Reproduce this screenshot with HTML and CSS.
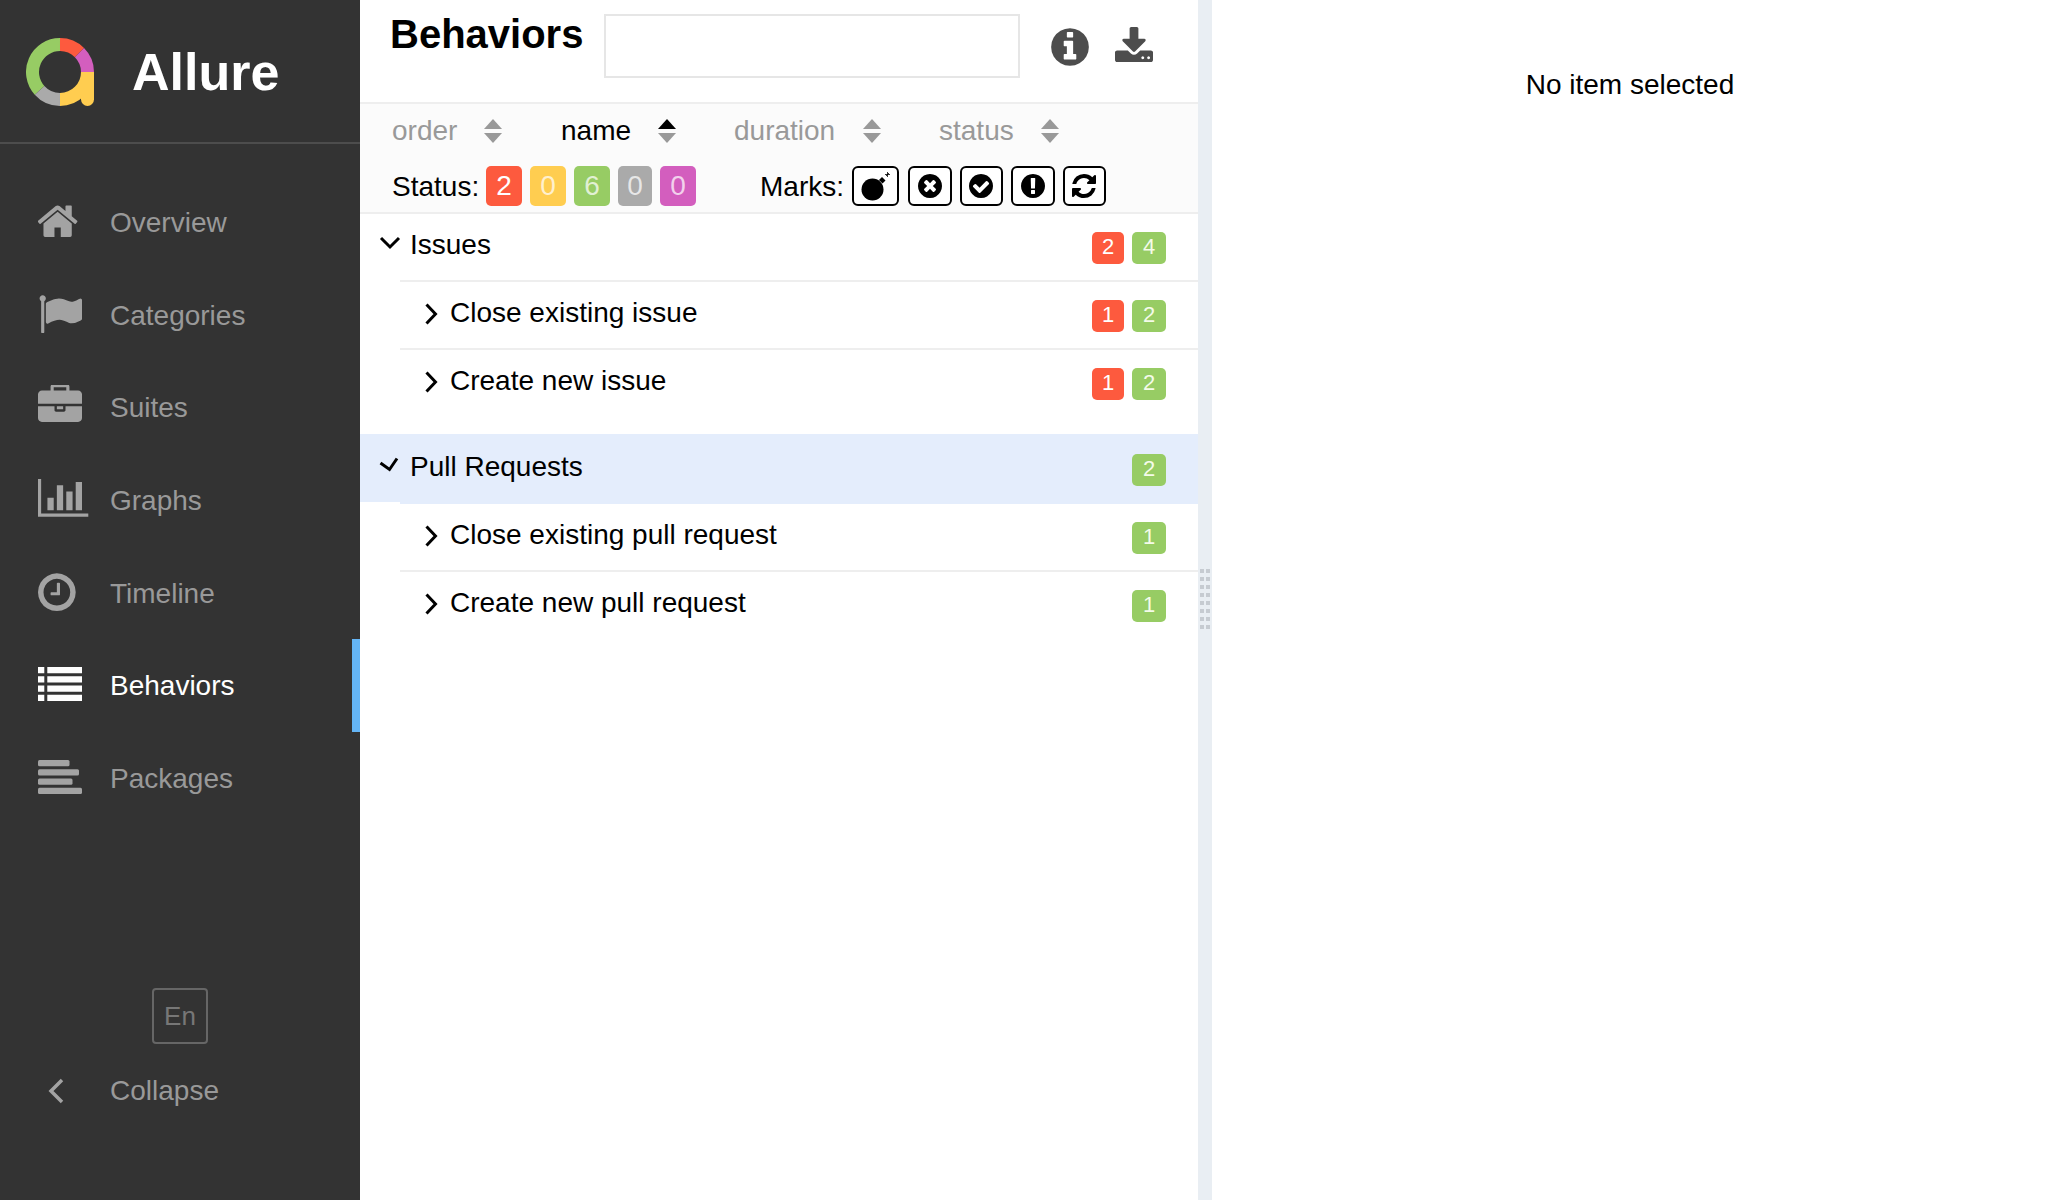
FILE: index.html
```html
<!DOCTYPE html>
<html lang="en">
<head>
<meta charset="utf-8">
<title>Allure</title>
<link rel="stylesheet" href="styles.css">
</head>
<body>
<div class="app">
  <aside class="side">
    <div class="brand">
      <svg class="logo" viewBox="0 0 68 68" fill="none" stroke-width="13">
        <path stroke="#97cc64" d="M13.57 52.4A27.5 27.5 0 0 1 34 6.5"/>
        <path stroke="#fd5a3e" d="M34 6.500A27.500 27.500 0 0 1 53.450 14.550"/>
        <path stroke="#d35ebe" d="M53.450 14.550A27.500 27.500 0 0 1 61.500 34"/>
        <path stroke="#aaaaaa" d="M34 61.500A27.500 27.500 0 0 1 13.570 52.400"/>
        <path stroke="#ffcd50" d="M61.500 34A27.500 27.500 0 0 1 34 61.500"/>
        <path fill="#ffcd50" stroke="none" d="M55 34h13v27.500a6.500 6.500 0 0 1-13 0z"/>
      </svg>
      <span class="brand-name">Allure</span>
    </div>
    <nav class="nav">
      <a class="nav-item"><svg class="nav-ico" viewBox="0 0 1792 1792"><path transform="translate(-97 -32)" d="M1472 992v480q0 26-19 45t-45 19h-384v-384h-256v384h-384q-26 0-45-19t-19-45v-480q0-1 .5-3t.5-3l575-474 575 474q1 2 1 6zm223-69l-62 74q-8 9-21 11h-3q-13 0-21-7l-692-577-692 577q-12 8-24 7-13-2-21-11l-62-74q-8-10-7-23.500t11-21.500l719-599q32-26 76-26t76 26l244 204v-195q0-14 9-23t23-9h192q14 0 23 9t9 23v408l219 182q10 8 11 21.500t-7 23.500z"/></svg><span>Overview</span></a>
      <a class="nav-item"><svg class="nav-ico" viewBox="0 0 1792 1792"><path transform="translate(0 -32)" d="M320 256q0 72-64 110v1266q0 13-9.500 22.500t-22.500 9.500h-64q-13 0-22.500-9.500t-9.500-22.500v-1266q-64-38-64-110 0-53 37.500-90.500t90.500-37.500 90.500 37.500 37.500 90.500zm1472 64v763q0 25-12.500 38.500t-39.500 27.500q-215 116-369 116-61 0-123.500-22t-108.500-48-115.500-48-142.500-22q-192 0-464 146-17 9-33 9-26 0-45-19t-19-45v-742q0-32 31-55 21-14 79-43 236-120 421-120 107 0 200 29t219 88q38 19 88 19 54 0 117.500-21t110-47 88-47 54.500-21q26 0 45 19t19 45z"/></svg><span>Categories</span></a>
      <a class="nav-item"><svg class="nav-ico" viewBox="0 0 1792 1792"><path transform="translate(0 -32)" d="M640 256h512v-128h-512v128zm1152 640v480q0 66-47 113t-113 47h-1472q-66 0-113-47t-47-113v-480h672v160q0 26 19 45t45 19h320q26 0 45-19t19-45v-160h672zm-768 0v128h-256v-128h256zm768-480v384h-1792v-384q0-66 47-113t113-47h352v-160q0-40 28-68t68-28h576q40 0 68 28t28 68v160h352q66 0 113 47t47 113z"/></svg><span>Suites</span></a>
      <a class="nav-item"><svg class="nav-ico" viewBox="0 0 1792 1792" overflow="visible"><path transform="translate(64 -90)" d="M576 896v512h-256v-512h256zm384-512v1024h-256v-1024h256zm1024 1152v128h-2048v-1536h128v1408h1920zm-640-896v768h-256v-768h256zm384-384v1152h-256v-1152h256z"/></svg><span>Graphs</span></a>
      <a class="nav-item"><svg class="nav-ico" viewBox="0 0 1792 1792"><path transform="translate(-128 -32)" d="M1024 544v448q0 14-9 23t-23 9h-320q-14 0-23-9t-9-23v-64q0-14 9-23t23-9h224v-352q0-14 9-23t23-9h64q14 0 23 9t9 23zm416 352q0-148-73-273t-198-198-273-73-273 73-198 198-73 273 73 273 198 198 273 73 273-73 198-198 73-273zm224 0q0 209-103 385.500t-279.500 279.500-385.500 103-385.500-103-279.500-279.500-103-385.500 103-385.500 279.500-279.500 385.500-103 385.500 103 279.500 279.500 103 385.500z"/></svg><span>Timeline</span></a>
      <a class="nav-item nav-active"><svg class="nav-ico" viewBox="0 0 44 44"><path d="M0 4h6.300v6.300H0zM9.300 4H44v6.300H9.300zM0 13.200h6.300v6.300H0zM9.300 13.200H44v6.300H9.300zM0 22.500h6.300v6.300H0zM9.300 22.500H44v6.300H9.300zM0 31.700h6.300V38H0zM9.300 31.700H44V38H9.300z"/></svg><span>Behaviors</span></a>
      <a class="nav-item"><svg class="nav-ico" viewBox="0 0 44 44"><rect x="0" y="4" width="31.500" height="6.300" rx="1.500"/><rect x="0" y="13.200" width="41" height="6.300" rx="1.500"/><rect x="0" y="22.500" width="34.500" height="6.300" rx="1.500"/><rect x="0" y="31.700" width="44" height="6.300" rx="1.500"/></svg><span>Packages</span></a>
    </nav>
    <div class="side-foot">
      <button class="lang">En</button>
      <a class="collapse"><svg class="collapse-ico" viewBox="0 0 16 26" fill="none"><path d="M14 2 3 13l11 11"/></svg><span>Collapse</span></a>
    </div>
  </aside>

  <main class="pane">
    <header class="head">
      <h2 class="title">Behaviors</h2>
      <input class="search" type="text" aria-label="Search">
      <svg class="ico-info" viewBox="0 0 1536 1792"><path d="M1024 1376v-160q0-14-9-23t-23-9h-96v-512q0-14-9-23t-23-9h-320q-14 0-23 9t-9 23v160q0 14 9 23t23 9h96v320h-96q-14 0-23 9t-9 23v160q0 14 9 23t23 9h448q14 0 23-9t9-23zm-128-896v-160q0-14-9-23t-23-9h-192q-14 0-23 9t-9 23v160q0 14 9 23t23 9h192q14 0 23-9t9-23zm640 416q0 209-103 385.500t-279.500 279.500-385.500 103-385.500-103-279.500-279.500-103-385.500 103-385.500 279.500-279.500 385.500-103 385.500 103 279.500 279.500 103 385.500z"/></svg>
      <svg class="ico-down" viewBox="0 0 1664 1792"><path d="M1344 1344q0-26-19-45t-45-19-45 19-19 45 19 45 45 19 45-19 19-45zm256 0q0-26-19-45t-45-19-45 19-19 45 19 45 45 19 45-19 19-45zm128-224v320q0 40-28 68t-68 28h-1472q-40 0-68-28t-28-68v-320q0-40 28-68t68-28h465l135 136q58 56 136 56t136-56l136-136h464q40 0 68 28t28 68zm-325-569q17 41-14 70l-448 448q-18 19-45 19t-45-19l-448-448q-31-29-14-70 17-39 59-39h256v-448q0-26 19-45t45-19h256q26 0 45 19t19 45v448h256q42 0 59 39z" transform="translate(-64 0)"/></svg>
    </header>

    <section class="tools">
      <div class="sorts">
        <div class="sort s-order"><span>order</span><i class="arrows"></i></div>
        <div class="sort s-name sort-on"><span>name</span><i class="arrows"></i></div>
        <div class="sort s-dur"><span>duration</span><i class="arrows"></i></div>
        <div class="sort s-status"><span>status</span><i class="arrows"></i></div>
      </div>
      <div class="filters">
        <span class="lbl">Status:</span>
        <div class="stats">
          <span class="stat red">2</span>
          <span class="stat yellow">0</span>
          <span class="stat green">6</span>
          <span class="stat gray">0</span>
          <span class="stat purple">0</span>
        </div>
        <span class="lbl lbl-marks">Marks:</span>
        <div class="marks">
          <span class="mark mark-bomb"><svg viewBox="0 0 32 32"><circle cx="12.500" cy="19.500" r="11"/><path d="m19 10 3-3 3.500 3.500-3 3z"/><path class="fuse" d="M26 6l3-3M27.500 2v5M25 4.500h5"/></svg></span>
          <span class="mark"><svg viewBox="128 128 1536 1536"><path transform="translate(128 0)" d="M1149 1122q0-26-19-45l-181-181 181-181q19-19 19-45 0-27-19-46l-90-90q-19-19-46-19-26 0-45 19l-181 181-181-181q-19-19-45-19-27 0-46 19l-90 90q-19 19-19 46 0 26 19 45l181 181-181 181q-19 19-19 45 0 27 19 46l90 90q19 19 46 19 26 0 45-19l181-181 181 181q19 19 45 19 27 0 46-19l90-90q19-19 19-46zm387-226q0 209-103 385.500t-279.500 279.500-385.500 103-385.500-103-279.500-279.500-103-385.500 103-385.500 279.500-279.500 385.500-103 385.500 103 279.500 279.500 103 385.500z"/></svg></span>
          <span class="mark"><svg viewBox="128 128 1536 1536"><path transform="translate(128 0)" d="M1284 734q0-28-18-46l-91-90q-19-19-45-19t-45 19l-408 407-226-226q-19-19-45-19t-45 19l-91 90q-18 18-18 46 0 27 18 45l362 362q19 19 45 19 27 0 46-19l543-543q18-18 18-45zm252 162q0 209-103 385.500t-279.500 279.500-385.500 103-385.500-103-279.500-279.500-103-385.500 103-385.500 279.500-279.500 385.500-103 385.500 103 279.500 279.500 103 385.500z"/></svg></span>
          <span class="mark"><svg viewBox="128 128 1536 1536"><path transform="translate(128 0)" d="M768 128q209 0 385.500 103t279.500 279.500 103 385.500-103 385.500-279.500 279.500-385.500 103-385.500-103-279.500-279.500-103-385.500 103-385.500 279.500-279.500 385.500-103zm128 1247v-190q0-14-9-23.500t-22-9.500h-192q-13 0-23 10t-10 23v190q0 13 10 23t23 10h192q13 0 22-9.500t9-23.500zm-2-344l18-621q0-12-10-18-10-8-24-8h-220q-14 0-24 8-10 6-10 18l17 621q0 10 10 17.500t24 7.500h185q14 0 23.500-7.500t10.500-17.500z"/></svg></span>
          <span class="mark"><svg viewBox="128 128 1536 1536"><path d="M1639 1056q0 5-1 7-64 268-268 434.500t-478 166.500q-146 0-282.500-55t-243.500-157l-129 129q-19 19-45 19t-45-19-19-45v-448q0-26 19-45t45-19h448q26 0 45 19t19 45-19 45l-137 137q71 66 161 102t187 36q134 0 250-65t186-179q11-17 53-117 8-23 30-23h192q13 0 22.500 9.500t9.500 22.500zm25-800v448q0 26-19 45t-45 19h-448q-26 0-45-19t-19-45 19-45l138-138q-148-137-349-137-134 0-250 65t-186 179q-11 17-53 117-8 23-30 23h-199q-13 0-22.500-9.500t-9.500-22.500v-7q65-268 270-434.500t480-166.500q146 0 284 55.500t245 156.500l130-129q19-19 45-19t45 19 19 45z"/></svg></span>
        </div>
      </div>
    </section>

    <section class="tree">
      <div class="group">
        <div class="row row-top">
          <svg class="chev chev-down" viewBox="0 0 22 14"><path d="M2 2l9 9 9-9"/></svg>
          <span class="row-name">Issues</span>
          <span class="badge red">2</span><span class="badge green">4</span>
        </div>
        <div class="row row-sub row-rule">
          <svg class="chev chev-right" viewBox="0 0 14 24"><path d="M2.500 2.500l9 9.500-9 9.500"/></svg>
          <span class="row-name">Close existing issue</span>
          <span class="badge red">1</span><span class="badge green">2</span>
        </div>
        <div class="row row-sub row-rule">
          <svg class="chev chev-right" viewBox="0 0 14 24"><path d="M2.500 2.500l9 9.500-9 9.500"/></svg>
          <span class="row-name">Create new issue</span>
          <span class="badge red">1</span><span class="badge green">2</span>
        </div>
      </div>
      <div class="group">
        <div class="row row-top row-on">
          <svg class="chev chev-down" viewBox="0 0 22 14" overflow="visible"><path d="M1.500 5l9 6.500 7.500-11"/></svg>
          <span class="row-name">Pull Requests</span>
          <span class="badge green">2</span>
        </div>
        <div class="row row-sub">
          <svg class="chev chev-right" viewBox="0 0 14 24"><path d="M2.500 2.500l9 9.500-9 9.500"/></svg>
          <span class="row-name">Close existing pull request</span>
          <span class="badge green">1</span>
        </div>
        <div class="row row-sub row-rule">
          <svg class="chev chev-right" viewBox="0 0 14 24"><path d="M2.500 2.500l9 9.500-9 9.500"/></svg>
          <span class="row-name">Create new pull request</span>
          <span class="badge green">1</span>
        </div>
      </div>
    </section>
  </main>

  <div class="split"><div class="grip"></div></div>

  <section class="detail">
    <p class="empty">No item selected</p>
  </section>
</div>
</body>
</html>
```

FILE: styles.css
```css
* { box-sizing: border-box; }
html, body { margin: 0; height: 100%; }
body { font-family: "Liberation Sans", Arial, sans-serif; font-size: 28px; color: #000; background: #fff; }
.app { display: flex; height: 1200px; overflow: hidden; }

.side { width: 360px; flex: none; background: #333; display: flex; flex-direction: column; color: #999; }
.brand { height: 144px; border-bottom: 2px solid #4d4d4d; display: flex; align-items: center; padding-left: 26px; }
.logo { width: 68px; height: 68px; margin-top: 1px; }
.brand-name { font-size: 52px; font-weight: 700; color: #fff; margin: 2px 0 0 38px; }
.nav { margin-top: 32px; display: flex; flex-direction: column; }
.nav-item { height: 92.600px; display: flex; align-items: center; padding-left: 38px; position: relative; }
.nav-item span { margin-top: 2px; }
.nav-ico { width: 44px; height: 44px; flex: none; fill: #a3a3a3; margin-right: 28px; }
.nav-active { color: #fff; }
.nav-active .nav-ico { fill: #fff; }
.nav-active::after { content: ""; position: absolute; right: 0; top: 0; bottom: 0; width: 8px; background: #64b5f6; }
.side-foot { margin-top: auto; padding-bottom: 87px; display: flex; flex-direction: column; }
.lang { width: 56px; height: 56px; margin-left: 152px; background: none; border: 2px solid #666; border-radius: 4px; color: #777; font: 26px "Liberation Sans", Arial, sans-serif; padding: 0; }
.collapse { display: flex; align-items: center; height: 44px; margin-top: 25px; padding-left: 48px; }
.collapse-ico { width: 16px; height: 26px; margin-right: 46px; stroke: #a3a3a3; stroke-width: 3.500; }

.pane { width: 838px; flex: none; display: flex; flex-direction: column; }
.head { height: 104px; border-bottom: 2px solid #eee; display: flex; align-items: flex-start; padding-left: 30px; }
.title { margin: 11px 0 0; font-size: 40px; line-height: 46px; font-weight: 700; width: 214px; flex: none; }
.search { width: 416px; height: 64px; margin-top: 14px; border: 2px solid #e6e6e6; background: #fff; flex: none; padding: 0; }
.ico-info { width: 38px; height: 44px; margin: 25px 0 0 31px; fill: #4d4d4d; flex: none; }
.ico-down { width: 38px; height: 41px; margin: 27px 0 0 26px; fill: #4d4d4d; flex: none; }

.tools { height: 110px; background: #fbfbfb; border-bottom: 2px solid #eee; padding-left: 32px; display: flex; flex-direction: column; }
.sorts { height: 54px; display: flex; align-items: center; color: #999; }
.sort { display: flex; align-items: center; }
.s-order { width: 169px; }
.s-name { width: 173px; color: #000; }
.s-dur { width: 205px; }
.s-order span { width: 92px; }
.s-name span { width: 97px; }
.s-dur span { width: 129px; }
.s-status span { width: 102px; }
.arrows { display: block; width: 18px; height: 24px; position: relative; }
.arrows::before, .arrows::after { content: ""; position: absolute; left: 0; border-left: 9px solid transparent; border-right: 9px solid transparent; }
.arrows::before { top: 0; border-bottom: 10.500px solid #999; }
.arrows::after { bottom: 0; border-top: 10.500px solid #999; }
.sort-on .arrows::before { border-bottom-color: #000; }
.filters { display: flex; align-items: center; height: 40px; margin-top: 8px; }
.lbl { width: 94px; flex: none; padding-top: 2px; }
.stats { display: flex; gap: 8px; width: 274px; flex: none; }
.stat { width: 36px; height: 40px; border-radius: 5px; color: #fff; text-align: center; line-height: 40px; }
.stat.gray { width: 34px; }
.stat.yellow, .stat.green, .stat.gray, .stat.purple { color: rgba(255,255,255,.72); }
.red { background: #fd5a3e; }
.yellow { background: #ffcd50; }
.green { background: #97cc64; }
.gray { background: #aaa; }
.purple { background: #d35ebe; }
.lbl-marks { width: 92px; }
.marks { display: flex; gap: 8px; }
.mark { width: 43.500px; height: 40px; border: 2px solid #000; border-radius: 6px; background: #fff; display: flex; align-items: center; justify-content: center; }
.mark svg { width: 24px; height: 24px; fill: #000; }
.mark-bomb { width: 47px; margin-right: 1px; }
.mark-bomb svg { width: 32px; height: 32px; }
.mark .fuse { fill: none; stroke: #000; stroke-width: .8; }

.group { margin-bottom: 16px; }
.group:last-child { margin-bottom: 0; }
.row { height: 68px; display: flex; align-items: center; padding-right: 32px; position: relative; }
.row-top { padding-left: 50px; }
.row-top .chev { position: absolute; left: 19px; }
.row-sub { padding-left: 90px; }
.row-sub .chev { position: absolute; left: 64px; top: 20px; }
.row-rule::before { content: ""; position: absolute; left: 40px; right: 0; top: -2px; height: 2px; background: #eee; }
.row-on { background: #e4edfc; }
.row-on + .row { margin-top: 2px; }
.row-on::after { content: ""; position: absolute; left: 40px; right: 0; bottom: -2px; height: 2px; background: #e4edfc; }
.row-name { margin-right: auto; position: relative; top: -3px; }
.row-on .row-name { top: -1px; }
.chev { fill: none; stroke: #000; stroke-width: 3; }
.chev-down { width: 22px; height: 14px; top: 22px; }
.row-on .chev-down { top: 24px; }
.chev-right { width: 14px; height: 24px; }
.badge { width: 32px; height: 32px; border-radius: 5px; color: #fff; font-size: 22px; line-height: 30px; text-align: center; flex: none; }
.badge.green { width: 34px; margin-left: 8px; color: #f4fbe9; }
.row-on .badge { position: relative; top: 2px; }

.split { width: 14px; flex: none; background: #e9eef3; display: flex; align-items: center; justify-content: center; }
.grip { width: 10px; height: 62px; background-image: repeating-linear-gradient(to right, #c6cbd1 0 4px, transparent 4px 6px); -webkit-mask: repeating-linear-gradient(to bottom, #000 0 4px, transparent 4px 8px); mask: repeating-linear-gradient(to bottom, #000 0 4px, transparent 4px 8px); }

.detail { flex: 1; text-align: center; }
.empty { margin: 69px 0 0; line-height: 32px; }
```
